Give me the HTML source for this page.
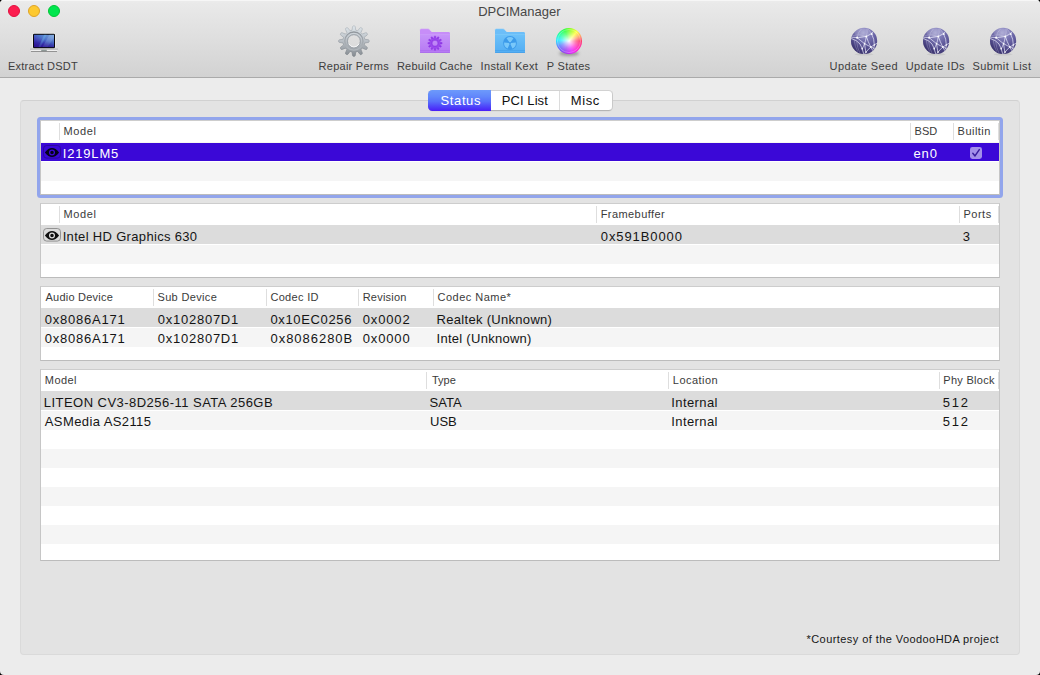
<!DOCTYPE html>
<html><head><meta charset="utf-8"><title>DPCIManager</title>
<style>
html,body{margin:0;padding:0;background:#000;}
body{width:1040px;height:675px;overflow:hidden;position:relative;font-family:"Liberation Sans",sans-serif;}
#win{position:absolute;left:0;top:0;width:1040px;height:675px;background:#ececec;border-radius:4px;overflow:hidden;}
#bar{position:absolute;left:0;top:0;width:1040px;height:77px;background:linear-gradient(#ececec 0px,#e9e9e9 4px,#dedede 40px,#d2d2d2 77px);border-bottom:1px solid #aaaaaa;box-shadow:inset 0 1px 0 #f6f6f6;}
.abs{position:absolute;display:block;}
.tl{position:absolute;top:5px;width:12px;height:12px;border-radius:50%;box-sizing:border-box;}
.t{position:absolute;white-space:nowrap;line-height:1;margin:0;padding:0;}
#box{position:absolute;left:20px;top:100px;width:1000px;height:555px;box-sizing:border-box;background:#e3e3e3;border:1px solid #dadada;border-top-color:#d1d1d1;border-radius:4px;}
#seg{position:absolute;left:428px;top:90px;width:185px;height:21px;box-sizing:border-box;border-radius:4.5px;background:#fff;border:1px solid #c9c9c9;border-bottom-color:#b4b4b4;border-top-color:#d2d2d2;box-shadow:0 0.5px 0.5px rgba(0,0,0,0.06);}
#seg .on{position:absolute;left:-1px;top:-1px;width:63px;height:21px;border-radius:4.5px 0 0 4.5px;background:linear-gradient(#6d9afb 0%,#6288fb 30%,#5870fb 55%,#4d3ef9 82%,#4a1ef7 100%);}
#seg .sp{position:absolute;left:130px;top:0;width:1px;height:19px;background:#dcdcdc;}
.tbl{position:absolute;left:40px;width:958px;background:#fff;border:1px solid #c6c6c6;border-top-color:#cdcdcd;border-bottom-color:#bcbcbc;overflow:hidden;}
.tbl i{position:absolute;display:block;}
.tbl .st{left:0;width:958px;background:#f5f5f5;}
.tbl .sel{left:0;width:958px;}
.tbl .dv{top:2px;width:1px;height:17px;background:#dedede;}
#ring{position:absolute;left:37px;top:117px;width:966px;height:81px;box-sizing:border-box;border:3px solid #92a5ec;border-radius:3.5px;}
</style></head><body><div id="win">
<div id="bar"></div>
<div class="tl" style="left:8px;background:#fc1d4f;border:0.5px solid #e2103f"></div>
<div class="tl" style="left:28px;background:#fdc930;border:0.5px solid #dfa326"></div>
<div class="tl" style="left:48px;background:#00e64e;border:0.5px solid #00c535"></div>

<svg class="abs" style="left:28px;top:30px" width="32" height="24" viewBox="0 0 32 24">
<defs>
<linearGradient id="scr" x1="0" y1="1" x2="1" y2="0"><stop offset="0" stop-color="#2d1495"/><stop offset="0.3" stop-color="#3533b0"/><stop offset="0.6" stop-color="#4a74cc"/><stop offset="1" stop-color="#79a4dc"/></linearGradient>
<linearGradient id="scr2" x1="0" y1="0" x2="0" y2="1"><stop offset="0" stop-color="#fff" stop-opacity="0"/><stop offset="0.6" stop-color="#2a0c8a" stop-opacity="0.15"/><stop offset="1" stop-color="#2a0c8a" stop-opacity="0.6"/></linearGradient>
<linearGradient id="base" x1="0" y1="0" x2="0" y2="1"><stop offset="0" stop-color="#dcdcdc"/><stop offset="0.6" stop-color="#f0f0f0"/><stop offset="1" stop-color="#c8c8c8"/></linearGradient>
</defs>
<rect x="4.5" y="3.3" width="23" height="15.2" rx="1.7" fill="#f6f6f6"/>
<rect x="5" y="3.8" width="22" height="14.4" rx="1.3" fill="#08080c"/>
<rect x="6" y="4.8" width="20" height="12.3" fill="url(#scr)"/>
<path d="M10.5 17.1 L16.2 4.8 L18.6 4.8 L12.6 17.1 Z" fill="#6fc4f0" opacity="0.38"/>
<path d="M14.6 17.1 L21.4 4.8 L26 4.8 L26 7.4 L19.6 17.1 Z" fill="#a9c9f1" opacity="0.26"/>
<rect x="6" y="4.8" width="20" height="12.3" fill="url(#scr2)"/>
<path d="M2 18.9 H30 L29.2 21.3 Q29 21.7 28.4 21.7 H3.6 Q3 21.7 2.8 21.3 Z" fill="url(#base)"/>
<rect x="2" y="18.7" width="28" height="0.8" fill="#a9a9a9"/>
<rect x="13.2" y="19.7" width="5.6" height="1.5" rx="0.3" fill="#8d9896"/>
<rect x="3" y="21.2" width="26" height="0.8" fill="#7a7a7a" opacity="0.9"/>
</svg>
<svg class="abs" style="left:337px;top:24px" width="34" height="34" viewBox="0 0 34 34">
<defs>
<linearGradient id="gg" x1="0" y1="0" x2="0" y2="1"><stop offset="0" stop-color="#dfe6eb"/><stop offset="0.5" stop-color="#b9bfc5"/><stop offset="1" stop-color="#868c92"/></linearGradient>
<linearGradient id="gs" x1="0" y1="0" x2="0" y2="1"><stop offset="0" stop-color="#b3bac0"/><stop offset="1" stop-color="#7b8187"/></linearGradient>
<linearGradient id="gr" x1="0" y1="0" x2="0" y2="1"><stop offset="0" stop-color="#8a9096"/><stop offset="1" stop-color="#b4babf"/></linearGradient>
</defs>
<path d="M15.04 6.26 L15.52 2.67 L16.06 1.92 L17.74 1.92 L18.28 2.67 L18.76 6.26 L20.71 6.78 L22.93 3.91 L23.76 3.54 L25.21 4.37 L25.31 5.29 L23.93 8.64 L25.36 10.07 L28.71 8.69 L29.63 8.79 L30.46 10.24 L30.09 11.07 L27.22 13.29 L27.74 15.24 L31.33 15.72 L32.08 16.26 L32.08 17.94 L31.33 18.48 L27.74 18.96 L27.22 20.91 L30.09 23.13 L30.46 23.96 L29.63 25.41 L28.71 25.51 L25.36 24.13 L23.93 25.56 L25.31 28.91 L25.21 29.83 L23.76 30.66 L22.93 30.29 L20.71 27.42 L18.76 27.94 L18.28 31.53 L17.74 32.28 L16.06 32.28 L15.52 31.53 L15.04 27.94 L13.09 27.42 L10.87 30.29 L10.04 30.66 L8.59 29.83 L8.49 28.91 L9.87 25.56 L8.44 24.13 L5.09 25.51 L4.17 25.41 L3.34 23.96 L3.71 23.13 L6.58 20.91 L6.06 18.96 L2.47 18.48 L1.72 17.94 L1.72 16.26 L2.47 15.72 L6.06 15.24 L6.58 13.29 L3.71 11.07 L3.34 10.24 L4.17 8.79 L5.09 8.69 L8.44 10.07 L9.87 8.64 L8.49 5.29 L8.59 4.37 L10.04 3.54 L10.87 3.91 L13.09 6.78 Z M10.50 17.10 a6.4 6.4 0 1 0 12.8 0 a6.4 6.4 0 1 0 -12.8 0 Z" fill="url(#gg)" fill-rule="evenodd" stroke="url(#gs)" stroke-width="0.7" stroke-linejoin="round"/>
<circle cx="16.90" cy="17.10" r="9.1" fill="none" stroke="url(#gr)" stroke-width="1.3" opacity="0.9"/>
<circle cx="16.90" cy="17.10" r="6.6" fill="none" stroke="#9da3a9" stroke-width="0.8"/>
<path d="M11.79 20.05 A5.9 5.9 0 0 0 22.01 20.05" fill="none" stroke="#fbfcfd" stroke-width="0.9" stroke-linecap="round"/>
</svg>
<svg class="abs" style="left:418px;top:27px" width="34" height="28" viewBox="0 0 34 28">
<defs>
<linearGradient id="pff" x1="0" y1="0" x2="0" y2="1"><stop offset="0" stop-color="#c795f9"/><stop offset="1" stop-color="#b678f3"/></linearGradient>
</defs>
<path d="M2 3.4 Q2 2 3.4 2 H10 Q10.9 2 11.5 2.7 L13.2 4.6 Q13.7 5.1 14.5 5.1 H30.6 Q32 5.1 32 6.5 V10 H2 Z" fill="#c78df8"/>
<path d="M2 3.3 Q2 2 3.4 2 H10 Q10.9 2 11.5 2.7" fill="none" stroke="#d0a0fa" stroke-width="0.6"/>
<rect x="2" y="7.1" width="30" height="18.7" rx="1" fill="url(#pff)"/>
<rect x="2" y="7.1" width="30" height="0.8" fill="#d0a0fa" opacity="0.55"/>
<rect x="2" y="23.2" width="30" height="0.7" fill="#a868ec" opacity="0.7"/>
<rect x="2" y="25" width="30" height="0.8" fill="#a868ec"/>
<path d="M16.17 11.07 L16.29 9.14 L17.71 9.14 L17.83 11.07 L18.85 11.34 L19.92 9.73 L21.15 10.44 L20.28 12.17 L21.03 12.92 L22.76 12.05 L23.47 13.28 L21.86 14.35 L22.13 15.37 L24.06 15.49 L24.06 16.91 L22.13 17.03 L21.86 18.05 L23.47 19.12 L22.76 20.35 L21.03 19.48 L20.28 20.23 L21.15 21.96 L19.92 22.67 L18.85 21.06 L17.83 21.33 L17.71 23.26 L16.29 23.26 L16.17 21.33 L15.15 21.06 L14.08 22.67 L12.85 21.96 L13.72 20.23 L12.97 19.48 L11.24 20.35 L10.53 19.12 L12.14 18.05 L11.87 17.03 L9.94 16.91 L9.94 15.49 L11.87 15.37 L12.14 14.35 L10.53 13.28 L11.24 12.05 L12.97 12.92 L13.72 12.17 L12.85 10.44 L14.08 9.73 L15.15 11.34 Z M14.10 16.20 a2.9 2.9 0 1 0 5.8 0 a2.9 2.9 0 1 0 -5.8 0 Z" fill="#8f38e6" fill-rule="evenodd" stroke="#8f38e6" stroke-width="0.5" stroke-linejoin="round"/><circle cx="17.0" cy="16.2" r="4.4" fill="none" stroke="#a55af0" stroke-width="1.6" opacity="0.55"/>
</svg>
<svg class="abs" style="left:493px;top:27px" width="34" height="28" viewBox="0 0 34 28">
<defs>
<linearGradient id="bff" x1="0" y1="0" x2="0" y2="1"><stop offset="0" stop-color="#6ec2f9"/><stop offset="1" stop-color="#52adf3"/></linearGradient>
</defs>
<path d="M2 3.4 Q2 2 3.4 2 H10 Q10.9 2 11.5 2.7 L13.2 4.6 Q13.7 5.1 14.5 5.1 H30.6 Q32 5.1 32 6.5 V10 H2 Z" fill="#6cbef8"/>
<path d="M2 3.3 Q2 2 3.4 2 H10 Q10.9 2 11.5 2.7" fill="none" stroke="#86cdfb" stroke-width="0.6"/>
<rect x="2" y="7.1" width="30" height="18.7" rx="1" fill="url(#bff)"/>
<rect x="2" y="7.1" width="30" height="0.8" fill="#86cdfb" opacity="0.55"/>
<rect x="2" y="23.2" width="30" height="0.7" fill="#3f9de9" opacity="0.7"/>
<rect x="2" y="25" width="30" height="0.8" fill="#3f9de9"/>
<circle cx="17.0" cy="16.0" r="6.9" fill="#3c9bea"/><path d="M16.41 15.19 L13.53 11.23 A5.90 5.90 0 0 1 20.47 11.23 L17.59 15.19 A1.00 1.00 0 0 0 16.41 15.19 Z" fill="#79c8fa"/><path d="M17.99 15.90 L22.87 15.38 A5.90 5.90 0 0 1 19.40 21.39 L17.41 16.91 A1.00 1.00 0 0 0 17.99 15.90 Z" fill="#79c8fa"/><path d="M16.59 16.91 L14.60 21.39 A5.90 5.90 0 0 1 11.13 15.38 L16.01 15.90 A1.00 1.00 0 0 0 16.59 16.91 Z" fill="#79c8fa"/>
</svg>
<div class="abs" style="left:559px;top:50.5px;width:20px;height:5px;border-radius:50%;background:rgba(0,0,0,0.30);filter:blur(1.6px)"></div>
<div class="abs" style="left:556px;top:28px;width:26px;height:26px;border-radius:50%;background:radial-gradient(circle at 50% 50%,rgba(255,255,255,1) 0%,rgba(255,255,255,0.8) 12%,rgba(255,255,255,0.42) 38%,rgba(255,255,255,0.12) 68%,rgba(255,255,255,0) 86%),conic-gradient(from 90deg,#ff1d55,#ff00d0 50deg,#e000ff 75deg,#8a1cf0 110deg,#4a60ff 150deg,#00e8ff 185deg,#00ff90 215deg,#10ff20 250deg,#9dff00 285deg,#ffff20 310deg,#ff9a50 335deg,#ff1d55 360deg);"></div>
<div class="abs" style="left:557.2px;top:29.2px;width:23.6px;height:23.6px;box-sizing:border-box;border-radius:50%;border:0.8px solid rgba(255,255,255,0.28)"></div>
<svg class="abs" style="left:848px;top:25px" width="32" height="32" viewBox="0 0 32 32">
<defs>
<radialGradient id="g1g" cx="0.46" cy="0.2" r="0.9"><stop offset="0" stop-color="#aaa8d6"/><stop offset="0.3" stop-color="#7f7bb8"/><stop offset="0.62" stop-color="#5d5799"/><stop offset="1" stop-color="#3d3571"/></radialGradient>
<linearGradient id="g1d" x1="0" y1="1" x2="0.75" y2="0.3"><stop offset="0" stop-color="#1a1248" stop-opacity="0.55"/><stop offset="0.55" stop-color="#1a1248" stop-opacity="0.12"/><stop offset="1" stop-color="#1a1248" stop-opacity="0"/></linearGradient>
<clipPath id="g1c"><circle cx="16.1" cy="15.9" r="13.0"/></clipPath>
</defs>
<ellipse cx="16.1" cy="29.3" rx="9.5" ry="1.3" fill="#000" opacity="0.07"/>
<circle cx="16.1" cy="15.9" r="13.1" fill="url(#g1g)"/>
<circle cx="16.1" cy="15.9" r="13.1" fill="url(#g1d)"/>
<g clip-path="url(#g1c)" fill="none" stroke="#efeeff" stroke-linecap="round">
<g stroke-width="0.85" opacity="0.82">
<path d="M3.0 12.2 Q10 13.6 18.3 11.4 Q22.2 10.2 26.6 5.6"/>
<path d="M3.2 13.4 Q9.5 15.4 12 19 Q14 22 15.7 28.8"/>
<path d="M9.2 12.7 Q13 16 16.6 18.7 Q20.4 21 28.6 24.6"/>
<path d="M29 18.2 Q26 20.2 22.8 22 Q20 24.4 16.6 29"/>
<path d="M18.3 11.4 Q17.8 15.5 16.6 18.7 Q15.6 21.5 14.2 23.7"/>
<path d="M18.3 11.4 Q20 16.6 22.8 22 L25 26"/>
<path d="M23.7 9 Q26.4 14 26.3 19.9 Q26.2 22 25.6 24"/>
<path d="M16.6 18.7 Q17 23 18 27.6"/>
</g>
<g stroke-width="0.65" opacity="0.36">
<path d="M9.2 12.7 Q9.4 7.5 13.6 3.6"/>
<path d="M19 3 Q19.8 7.4 18.3 11.4"/>
<path d="M4.6 10.4 Q12 8.6 18.3 11.4"/>
<path d="M23.7 9 Q22 6 19.5 3.4"/>
<path d="M6.2 15.3 Q6.8 22 9.6 26.4"/>
<path d="M8.6 16.4 Q9.2 23 11.8 27.8"/>
</g>
</g>
<g fill="#fff">
<circle cx="9.2" cy="12.7" r="1.15" opacity="0.95"/><circle cx="18.3" cy="11.4" r="1.0" opacity="0.95"/><circle cx="23.7" cy="9" r="1.05" opacity="0.9"/>
<circle cx="16.6" cy="18.7" r="0.9" opacity="0.85"/><circle cx="22.8" cy="22" r="0.9" opacity="0.85"/><circle cx="14.2" cy="23.7" r="0.85" opacity="0.85"/>
<circle cx="18" cy="27" r="0.8" opacity="0.8"/><circle cx="26.3" cy="19.9" r="0.8" opacity="0.8"/>
</g>
<ellipse cx="15" cy="7.6" rx="8.6" ry="4.4" fill="#fff" opacity="0.13"/>
</svg>
<svg class="abs" style="left:920px;top:25px" width="32" height="32" viewBox="0 0 32 32">
<defs>
<radialGradient id="g2g" cx="0.46" cy="0.2" r="0.9"><stop offset="0" stop-color="#aaa8d6"/><stop offset="0.3" stop-color="#7f7bb8"/><stop offset="0.62" stop-color="#5d5799"/><stop offset="1" stop-color="#3d3571"/></radialGradient>
<linearGradient id="g2d" x1="0" y1="1" x2="0.75" y2="0.3"><stop offset="0" stop-color="#1a1248" stop-opacity="0.55"/><stop offset="0.55" stop-color="#1a1248" stop-opacity="0.12"/><stop offset="1" stop-color="#1a1248" stop-opacity="0"/></linearGradient>
<clipPath id="g2c"><circle cx="16.1" cy="15.9" r="13.0"/></clipPath>
</defs>
<ellipse cx="16.1" cy="29.3" rx="9.5" ry="1.3" fill="#000" opacity="0.07"/>
<circle cx="16.1" cy="15.9" r="13.1" fill="url(#g2g)"/>
<circle cx="16.1" cy="15.9" r="13.1" fill="url(#g2d)"/>
<g clip-path="url(#g2c)" fill="none" stroke="#efeeff" stroke-linecap="round">
<g stroke-width="0.85" opacity="0.82">
<path d="M3.0 12.2 Q10 13.6 18.3 11.4 Q22.2 10.2 26.6 5.6"/>
<path d="M3.2 13.4 Q9.5 15.4 12 19 Q14 22 15.7 28.8"/>
<path d="M9.2 12.7 Q13 16 16.6 18.7 Q20.4 21 28.6 24.6"/>
<path d="M29 18.2 Q26 20.2 22.8 22 Q20 24.4 16.6 29"/>
<path d="M18.3 11.4 Q17.8 15.5 16.6 18.7 Q15.6 21.5 14.2 23.7"/>
<path d="M18.3 11.4 Q20 16.6 22.8 22 L25 26"/>
<path d="M23.7 9 Q26.4 14 26.3 19.9 Q26.2 22 25.6 24"/>
<path d="M16.6 18.7 Q17 23 18 27.6"/>
</g>
<g stroke-width="0.65" opacity="0.36">
<path d="M9.2 12.7 Q9.4 7.5 13.6 3.6"/>
<path d="M19 3 Q19.8 7.4 18.3 11.4"/>
<path d="M4.6 10.4 Q12 8.6 18.3 11.4"/>
<path d="M23.7 9 Q22 6 19.5 3.4"/>
<path d="M6.2 15.3 Q6.8 22 9.6 26.4"/>
<path d="M8.6 16.4 Q9.2 23 11.8 27.8"/>
</g>
</g>
<g fill="#fff">
<circle cx="9.2" cy="12.7" r="1.15" opacity="0.95"/><circle cx="18.3" cy="11.4" r="1.0" opacity="0.95"/><circle cx="23.7" cy="9" r="1.05" opacity="0.9"/>
<circle cx="16.6" cy="18.7" r="0.9" opacity="0.85"/><circle cx="22.8" cy="22" r="0.9" opacity="0.85"/><circle cx="14.2" cy="23.7" r="0.85" opacity="0.85"/>
<circle cx="18" cy="27" r="0.8" opacity="0.8"/><circle cx="26.3" cy="19.9" r="0.8" opacity="0.8"/>
</g>
<ellipse cx="15" cy="7.6" rx="8.6" ry="4.4" fill="#fff" opacity="0.13"/>
</svg>
<svg class="abs" style="left:987px;top:25px" width="32" height="32" viewBox="0 0 32 32">
<defs>
<radialGradient id="g3g" cx="0.46" cy="0.2" r="0.9"><stop offset="0" stop-color="#aaa8d6"/><stop offset="0.3" stop-color="#7f7bb8"/><stop offset="0.62" stop-color="#5d5799"/><stop offset="1" stop-color="#3d3571"/></radialGradient>
<linearGradient id="g3d" x1="0" y1="1" x2="0.75" y2="0.3"><stop offset="0" stop-color="#1a1248" stop-opacity="0.55"/><stop offset="0.55" stop-color="#1a1248" stop-opacity="0.12"/><stop offset="1" stop-color="#1a1248" stop-opacity="0"/></linearGradient>
<clipPath id="g3c"><circle cx="16.1" cy="15.9" r="13.0"/></clipPath>
</defs>
<ellipse cx="16.1" cy="29.3" rx="9.5" ry="1.3" fill="#000" opacity="0.07"/>
<circle cx="16.1" cy="15.9" r="13.1" fill="url(#g3g)"/>
<circle cx="16.1" cy="15.9" r="13.1" fill="url(#g3d)"/>
<g clip-path="url(#g3c)" fill="none" stroke="#efeeff" stroke-linecap="round">
<g stroke-width="0.85" opacity="0.82">
<path d="M3.0 12.2 Q10 13.6 18.3 11.4 Q22.2 10.2 26.6 5.6"/>
<path d="M3.2 13.4 Q9.5 15.4 12 19 Q14 22 15.7 28.8"/>
<path d="M9.2 12.7 Q13 16 16.6 18.7 Q20.4 21 28.6 24.6"/>
<path d="M29 18.2 Q26 20.2 22.8 22 Q20 24.4 16.6 29"/>
<path d="M18.3 11.4 Q17.8 15.5 16.6 18.7 Q15.6 21.5 14.2 23.7"/>
<path d="M18.3 11.4 Q20 16.6 22.8 22 L25 26"/>
<path d="M23.7 9 Q26.4 14 26.3 19.9 Q26.2 22 25.6 24"/>
<path d="M16.6 18.7 Q17 23 18 27.6"/>
</g>
<g stroke-width="0.65" opacity="0.36">
<path d="M9.2 12.7 Q9.4 7.5 13.6 3.6"/>
<path d="M19 3 Q19.8 7.4 18.3 11.4"/>
<path d="M4.6 10.4 Q12 8.6 18.3 11.4"/>
<path d="M23.7 9 Q22 6 19.5 3.4"/>
<path d="M6.2 15.3 Q6.8 22 9.6 26.4"/>
<path d="M8.6 16.4 Q9.2 23 11.8 27.8"/>
</g>
</g>
<g fill="#fff">
<circle cx="9.2" cy="12.7" r="1.15" opacity="0.95"/><circle cx="18.3" cy="11.4" r="1.0" opacity="0.95"/><circle cx="23.7" cy="9" r="1.05" opacity="0.9"/>
<circle cx="16.6" cy="18.7" r="0.9" opacity="0.85"/><circle cx="22.8" cy="22" r="0.9" opacity="0.85"/><circle cx="14.2" cy="23.7" r="0.85" opacity="0.85"/>
<circle cx="18" cy="27" r="0.8" opacity="0.8"/><circle cx="26.3" cy="19.9" r="0.8" opacity="0.8"/>
</g>
<ellipse cx="15" cy="7.6" rx="8.6" ry="4.4" fill="#fff" opacity="0.13"/>
</svg>
<div id="box"></div>
<div id="seg"><div class="on"></div><div class="sp"></div></div>
<div class="tbl" style="top:120px;height:73px">
<i class="st" style="top:41px;height:19px"></i>
<i class="sel" style="top:22px;height:18px;background:#3b08d7"></i>
<i class="sel" style="top:21px;height:1px;background:#f7f7f2"></i>
<i class="dv" style="left:18px"></i>
<i class="dv" style="left:869px"></i>
<i class="dv" style="left:912px"></i>
<i class="dv" style="left:957px"></i>
</div>
<div id="ring"></div>
<div class="tbl" style="top:203px;height:73px">
<i class="st" style="top:41px;height:19px"></i>
<i class="sel" style="top:21px;height:19px;background:#dcdcdc"></i>
<i class="dv" style="left:18px"></i>
<i class="dv" style="left:555px"></i>
<i class="dv" style="left:918px"></i>
<i class="dv" style="left:957px"></i>
</div>
<div class="tbl" style="top:286px;height:73px">
<i class="st" style="top:41px;height:19px"></i>
<i class="sel" style="top:21px;height:19px;background:#dcdcdc"></i>
<i class="dv" style="left:112px"></i>
<i class="dv" style="left:225px"></i>
<i class="dv" style="left:317px"></i>
<i class="dv" style="left:392px"></i>
</div>
<div class="tbl" style="top:369px;height:190px">
<i class="st" style="top:41px;height:19px"></i>
<i class="st" style="top:79px;height:19px"></i>
<i class="st" style="top:117px;height:19px"></i>
<i class="st" style="top:155px;height:19px"></i>
<i class="sel" style="top:21px;height:19px;background:#dcdcdc"></i>
<i class="dv" style="left:385px"></i>
<i class="dv" style="left:627px"></i>
<i class="dv" style="left:898px"></i>
<i class="dv" style="left:957px"></i>
</div>
<svg class="abs" style="left:43.0px;top:145.2px" width="18" height="14" viewBox="0 0 18 14"><rect x="0.5" y="0.5" width="17" height="12.6" rx="3.2" fill="none" stroke="#2a0a9a" stroke-width="0.9"/><path d="M1.9 7.4 C4.2 4.1 6.6 2.9 9 2.9 C11.4 2.9 13.8 4.1 16.1 7.4 C13.8 10.7 11.4 11.9 9 11.9 C6.6 11.9 4.2 10.7 1.9 7.4 Z" fill="#05021a"/><circle cx="9" cy="7.4" r="2.4" fill="none" stroke="#3b08d7" stroke-width="1.25"/></svg>
<svg class="abs" style="left:43.0px;top:228.2px" width="18" height="14" viewBox="0 0 18 14"><rect x="0.5" y="0.5" width="17" height="12.6" rx="3.2" fill="none" stroke="#8a8a8a" stroke-width="0.9"/><path d="M1.9 7.4 C4.2 4.1 6.6 2.9 9 2.9 C11.4 2.9 13.8 4.1 16.1 7.4 C13.8 10.7 11.4 11.9 9 11.9 C6.6 11.9 4.2 10.7 1.9 7.4 Z" fill="#111"/><circle cx="9" cy="7.4" r="2.4" fill="none" stroke="#dcdcdc" stroke-width="1.25"/></svg>
<svg class="abs" style="left:970px;top:147px" width="12" height="12" viewBox="0 0 12 12"><rect x="0" y="0" width="12" height="12" rx="2.4" fill="#a38fea"/><path d="M2.8 6.3 L5.0 8.9 L9.3 2.6" fill="none" stroke="#3a1e9e" stroke-width="1.5" stroke-linecap="round" stroke-linejoin="round"/></svg>
<div class="t" id="title" style="left:478.20px;top:5px;font-size:13px;color:#474747;letter-spacing:0.000px">DPCIManager</div>
<div class="t" id="tb0" style="left:8.00px;top:61px;font-size:11px;color:#3d3d3d;letter-spacing:0.218px">Extract DSDT</div>
<div class="t" id="tb1" style="left:318.60px;top:61px;font-size:11px;color:#3d3d3d;letter-spacing:0.255px">Repair Perms</div>
<div class="t" id="tb2" style="left:396.90px;top:61px;font-size:11px;color:#3d3d3d;letter-spacing:0.267px">Rebuild Cache</div>
<div class="t" id="tb3" style="left:480.60px;top:61px;font-size:11px;color:#3d3d3d;letter-spacing:0.318px">Install Kext</div>
<div class="t" id="tb4" style="left:546.80px;top:61px;font-size:11px;color:#3d3d3d;letter-spacing:0.271px">P States</div>
<div class="t" id="tb5" style="left:829.60px;top:61px;font-size:11px;color:#3d3d3d;letter-spacing:0.380px">Update Seed</div>
<div class="t" id="tb6" style="left:905.70px;top:61px;font-size:11px;color:#3d3d3d;letter-spacing:0.422px">Update IDs</div>
<div class="t" id="tb7" style="left:972.40px;top:61px;font-size:11px;color:#3d3d3d;letter-spacing:0.430px">Submit List</div>
<div class="t" id="tab0" style="left:440.60px;top:94px;font-size:13px;color:#ffffff;letter-spacing:0.600px">Status</div>
<div class="t" id="tab1" style="left:501.70px;top:94px;font-size:13px;color:#101010;letter-spacing:0.086px">PCI List</div>
<div class="t" id="tab2" style="left:570.70px;top:94px;font-size:13px;color:#101010;letter-spacing:0.633px">Misc</div>
<div class="t" id="h1a" style="left:63.60px;top:126px;font-size:11px;color:#3a3a3a;letter-spacing:0.600px">Model</div>
<div class="t" id="h1b" style="left:914.60px;top:126px;font-size:11px;color:#3a3a3a;letter-spacing:-0.050px">BSD</div>
<div class="t" id="h1c" style="left:957.60px;top:126px;font-size:11px;color:#3a3a3a;letter-spacing:0.467px">Builtin</div>
<div class="t" id="r1a" style="left:62.70px;top:147px;font-size:13px;color:#ffffff;letter-spacing:0.833px">I219LM5</div>
<div class="t" id="r1b" style="left:913.40px;top:147px;font-size:13px;color:#ffffff;letter-spacing:0.950px">en0</div>
<div class="t" id="h2a" style="left:63.60px;top:209px;font-size:11px;color:#3a3a3a;letter-spacing:0.600px">Model</div>
<div class="t" id="h2b" style="left:600.70px;top:209px;font-size:11px;color:#3a3a3a;letter-spacing:0.430px">Framebuffer</div>
<div class="t" id="h2c" style="left:963.40px;top:209px;font-size:11px;color:#3a3a3a;letter-spacing:0.525px">Ports</div>
<div class="t" id="r2a" style="left:62.70px;top:230px;font-size:13px;color:#141414;letter-spacing:0.325px">Intel HD Graphics 630</div>
<div class="t" id="r2b" style="left:600.80px;top:230px;font-size:13px;color:#141414;letter-spacing:0.900px">0x591B0000</div>
<div class="t" id="r2c" style="left:962.80px;top:230px;font-size:13px;color:#141414;letter-spacing:3.600px">3</div>
<div class="t" id="h3a" style="left:45.50px;top:292px;font-size:11px;color:#3a3a3a;letter-spacing:0.227px">Audio Device</div>
<div class="t" id="h3b" style="left:157.50px;top:292px;font-size:11px;color:#3a3a3a;letter-spacing:0.333px">Sub Device</div>
<div class="t" id="h3c" style="left:270.40px;top:292px;font-size:11px;color:#3a3a3a;letter-spacing:0.329px">Codec ID</div>
<div class="t" id="h3d" style="left:362.70px;top:292px;font-size:11px;color:#3a3a3a;letter-spacing:0.214px">Revision</div>
<div class="t" id="h3e" style="left:437.50px;top:292px;font-size:11px;color:#3a3a3a;letter-spacing:0.490px">Codec Name*</div>
<div class="t" id="r3a0" style="left:44.75px;top:313px;font-size:13px;color:#141414;letter-spacing:0.778px">0x8086A171</div>
<div class="t" id="r3b0" style="left:157.75px;top:313px;font-size:13px;color:#141414;letter-spacing:0.750px">0x102807D1</div>
<div class="t" id="r3c0" style="left:270.50px;top:313px;font-size:13px;color:#141414;letter-spacing:0.633px">0x10EC0256</div>
<div class="t" id="r3d0" style="left:362.80px;top:313px;font-size:13px;color:#141414;letter-spacing:0.840px">0x0002</div>
<div class="t" id="r3e0" style="left:436.50px;top:313px;font-size:13px;color:#141414;letter-spacing:0.306px">Realtek (Unknown)</div>
<div class="t" id="r3a1" style="left:44.75px;top:332px;font-size:13px;color:#141414;letter-spacing:0.778px">0x8086A171</div>
<div class="t" id="r3b1" style="left:157.75px;top:332px;font-size:13px;color:#141414;letter-spacing:0.750px">0x102807D1</div>
<div class="t" id="r3c1" style="left:270.50px;top:332px;font-size:13px;color:#141414;letter-spacing:0.967px">0x8086280B</div>
<div class="t" id="r3d1" style="left:362.80px;top:332px;font-size:13px;color:#141414;letter-spacing:0.840px">0x0000</div>
<div class="t" id="r3e1" style="left:436.50px;top:332px;font-size:13px;color:#141414;letter-spacing:0.279px">Intel (Unknown)</div>
<div class="t" id="h4a" style="left:44.80px;top:375px;font-size:11px;color:#3a3a3a;letter-spacing:0.450px">Model</div>
<div class="t" id="h4b" style="left:432.00px;top:375px;font-size:11px;color:#3a3a3a;letter-spacing:0.000px">Type</div>
<div class="t" id="h4c" style="left:672.80px;top:375px;font-size:11px;color:#3a3a3a;letter-spacing:0.471px">Location</div>
<div class="t" id="h4d" style="left:943.30px;top:375px;font-size:11px;color:#3a3a3a;letter-spacing:0.288px">Phy Block</div>
<div class="t" id="r4a0" style="left:43.75px;top:396px;font-size:13px;color:#141414;letter-spacing:0.466px">LITEON CV3-8D256-11 SATA 256GB</div>
<div class="t" id="r4b0" style="left:429.50px;top:396px;font-size:13px;color:#141414;letter-spacing:0.033px">SATA</div>
<div class="t" id="r4c0" style="left:671.30px;top:396px;font-size:13px;color:#141414;letter-spacing:0.400px">Internal</div>
<div class="t" id="r4d0" style="left:942.70px;top:396px;font-size:13px;color:#141414;letter-spacing:1.850px">512</div>
<div class="t" id="r4a1" style="left:44.75px;top:415px;font-size:13px;color:#141414;letter-spacing:0.404px">ASMedia AS2115</div>
<div class="t" id="r4b1" style="left:430.00px;top:415px;font-size:13px;color:#141414;letter-spacing:0.000px">USB</div>
<div class="t" id="r4c1" style="left:671.30px;top:415px;font-size:13px;color:#141414;letter-spacing:0.400px">Internal</div>
<div class="t" id="r4d1" style="left:942.70px;top:415px;font-size:13px;color:#141414;letter-spacing:1.850px">512</div>
<div class="t" id="foot" style="left:806.50px;top:634px;font-size:11px;color:#161616;letter-spacing:0.430px">*Courtesy of the VoodooHDA project</div>
</div></body></html>
